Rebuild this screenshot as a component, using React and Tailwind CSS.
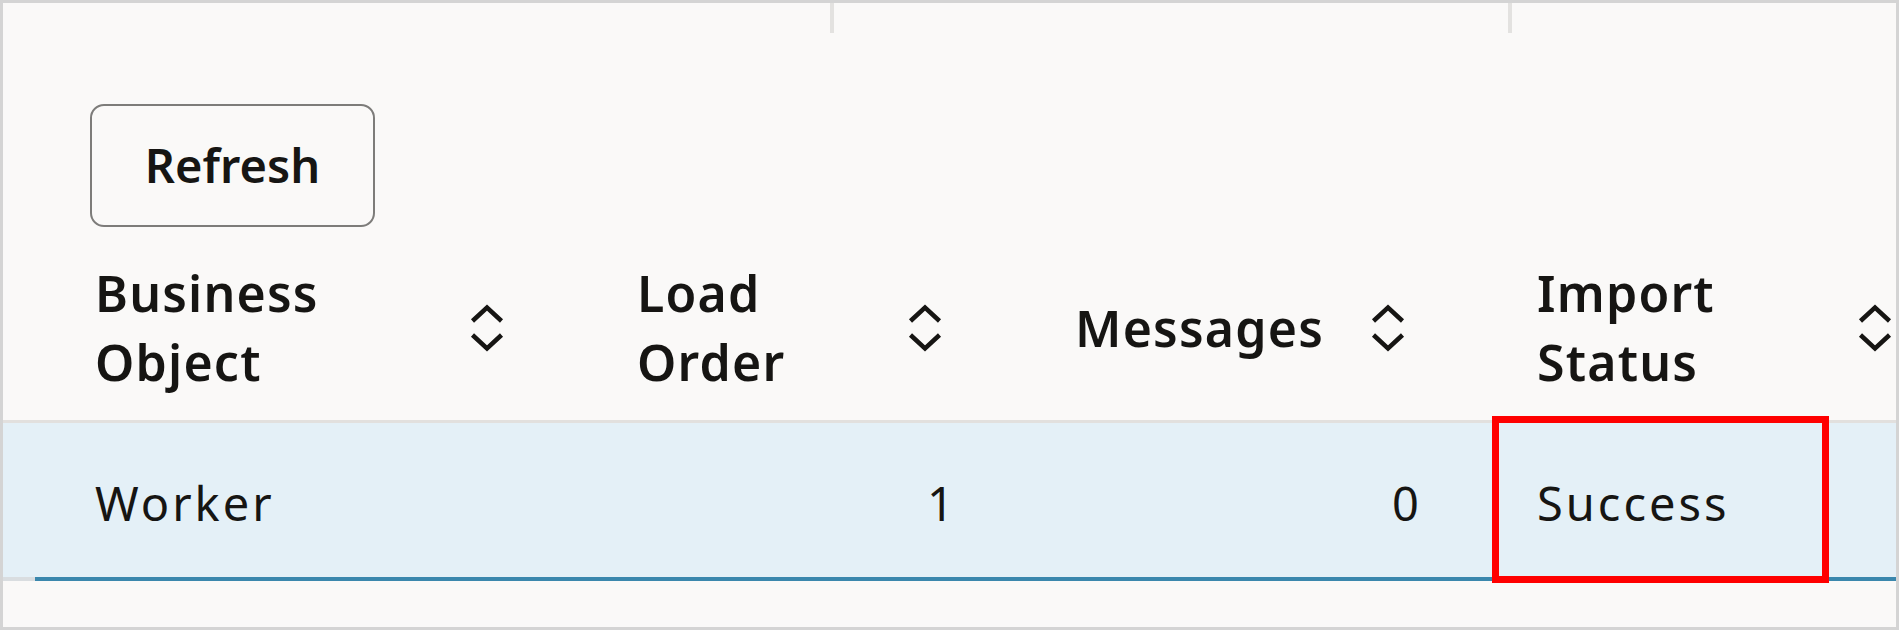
import React from 'react'

const font = { fontFamily: '"Noto Sans", "Open Sans", sans-serif' }

function SortIcon(){
  return (
    <svg width="36" height="48" viewBox="0 0 36 48" fill="none" stroke="#161513" strokeWidth="4.5" className="shrink-0">
      <path d="M3.5 17 L18 3.5 L32.5 17" />
      <path d="M3.5 31 L18 44.5 L32.5 31" />
    </svg>
  )
}

const cols = 'grid grid-cols-[542px_438px_462px_1fr] pl-[92px]'
const head = 'text-[50px] font-semibold leading-[69px] tracking-[1.2px]'

export default function App(){
  return (
    <div className="w-[1899px] h-[630px] bg-[#faf9f8] text-[#161513]" style={font}>
      <div className="relative h-full border-[3px] border-[#d4d4d4] flex flex-col">
        {/* column ticks from the table above */}
        <div className="flex h-[30px] pl-[827px]">
          <div className="w-[4px] h-full bg-[#e3e2e0]" />
          <div className="w-[4px] h-full bg-[#e3e2e0] ml-[674px]" />
        </div>

        <div className="mt-[71px] pl-[87px]">
          <button className="w-[285px] h-[123px] rounded-[14px] border-2 border-[#7d7c7a] text-[47px] font-semibold leading-none">
            Refresh
          </button>
        </div>

        {/* header */}
        <div className={cols + ' pt-[32px] pb-[23px] border-b-[3px] border-[#e2e0de]'}>
          <div className="w-[410px] flex items-center justify-between">
            <div className={head}>Business<br/>Object</div>
            <SortIcon />
          </div>
          <div className="w-[306px] flex items-center justify-between">
            <div className={head}>Load<br/>Order</div>
            <SortIcon />
          </div>
          <div className="w-[331px] flex items-center justify-between">
            <div className={head}>Messages</div>
            <SortIcon />
          </div>
          <div className="w-[356px] flex items-center justify-between">
            <div className={head}>Import<br/>Status</div>
            <SortIcon />
          </div>
        </div>

        {/* selected row */}
        <div className={cols + ' h-[154px] items-center pt-[6px] bg-[#e4f0f7] text-[47px] tracking-[3px]'}>
          <div>Worker</div>
          <div className="w-[320px] text-right">1</div>
          <div className="w-[347px] text-right">0</div>
          <div>Success</div>
        </div>
        <div className="flex h-[4px]">
          <div className="w-[32px] bg-[#d9dde0]" />
          <div className="flex-1 bg-[#3a87ad]" />
        </div>

        {/* annotation box */}
        <div className="absolute left-[1489px] top-[413px] w-[337px] h-[167px] border-[7px] border-[#ff0000]" />
      </div>
    </div>
  )
}
